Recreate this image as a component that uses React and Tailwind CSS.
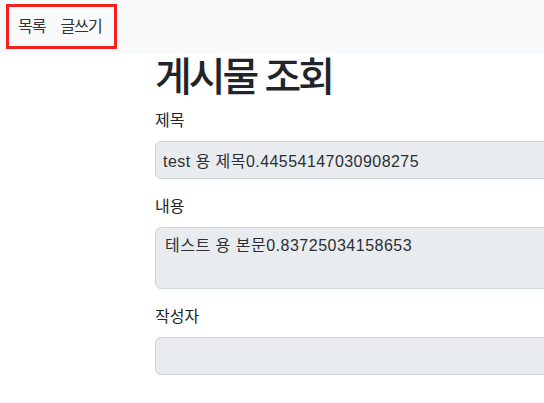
const font = "font-['Liberation_Sans','Noto_Sans_CJK_KR',sans-serif]";

const Field = ({ label, value, rows }) => (
  <div className="mb-4">
    <label className="mb-2 block text-base leading-6 text-[#212529]">{label}</label>
    {rows ? (
      <textarea
        readOnly
        rows={rows}
        value={value}
        className="block w-full resize-none rounded-[6px] border border-[#ced4da] bg-[#e9ecef] px-[9px] py-[6px] text-base leading-6 tracking-[0.5px] text-[#2b2f33] outline-none"
      />
    ) : (
      <input
        readOnly
        value={value}
        className="block h-[38px] w-full rounded-[6px] border border-[#ced4da] bg-[#e9ecef] px-[7px] py-[6px] text-base leading-6 tracking-[0.45px] text-[#2b2f33] outline-none"
      />
    )}
  </div>
);

export default function App() {
  return (
    <div className={`h-[403px] w-[544px] overflow-hidden bg-white ${font}`}>
      <nav className="h-[53px] bg-[#f8f9fa] pt-[4px]">
        <ul className="ml-[6px] flex h-[45px] w-[111px] items-center gap-[15px] border-[3px] border-[#f4211c] pl-[9px]">
          <li className="text-base tracking-[-1px] text-[#333]">목록</li>
          <li className="text-base tracking-[-1px] text-[#333]">글쓰기</li>
        </ul>
      </nav>

      <main className="ml-[155px] w-[420px]">
        <h1 className="mb-2 text-[40px] font-medium leading-[48px] tracking-[-3px] text-[#212529]">게시물 조회</h1>
        <Field label="제목" value="test 용 제목0.44554147030908275" />
        <Field label="내용" value="테스트 용 본문0.83725034158653" rows={2} />
        <Field label="작성자" value="" />
      </main>
    </div>
  );
}
